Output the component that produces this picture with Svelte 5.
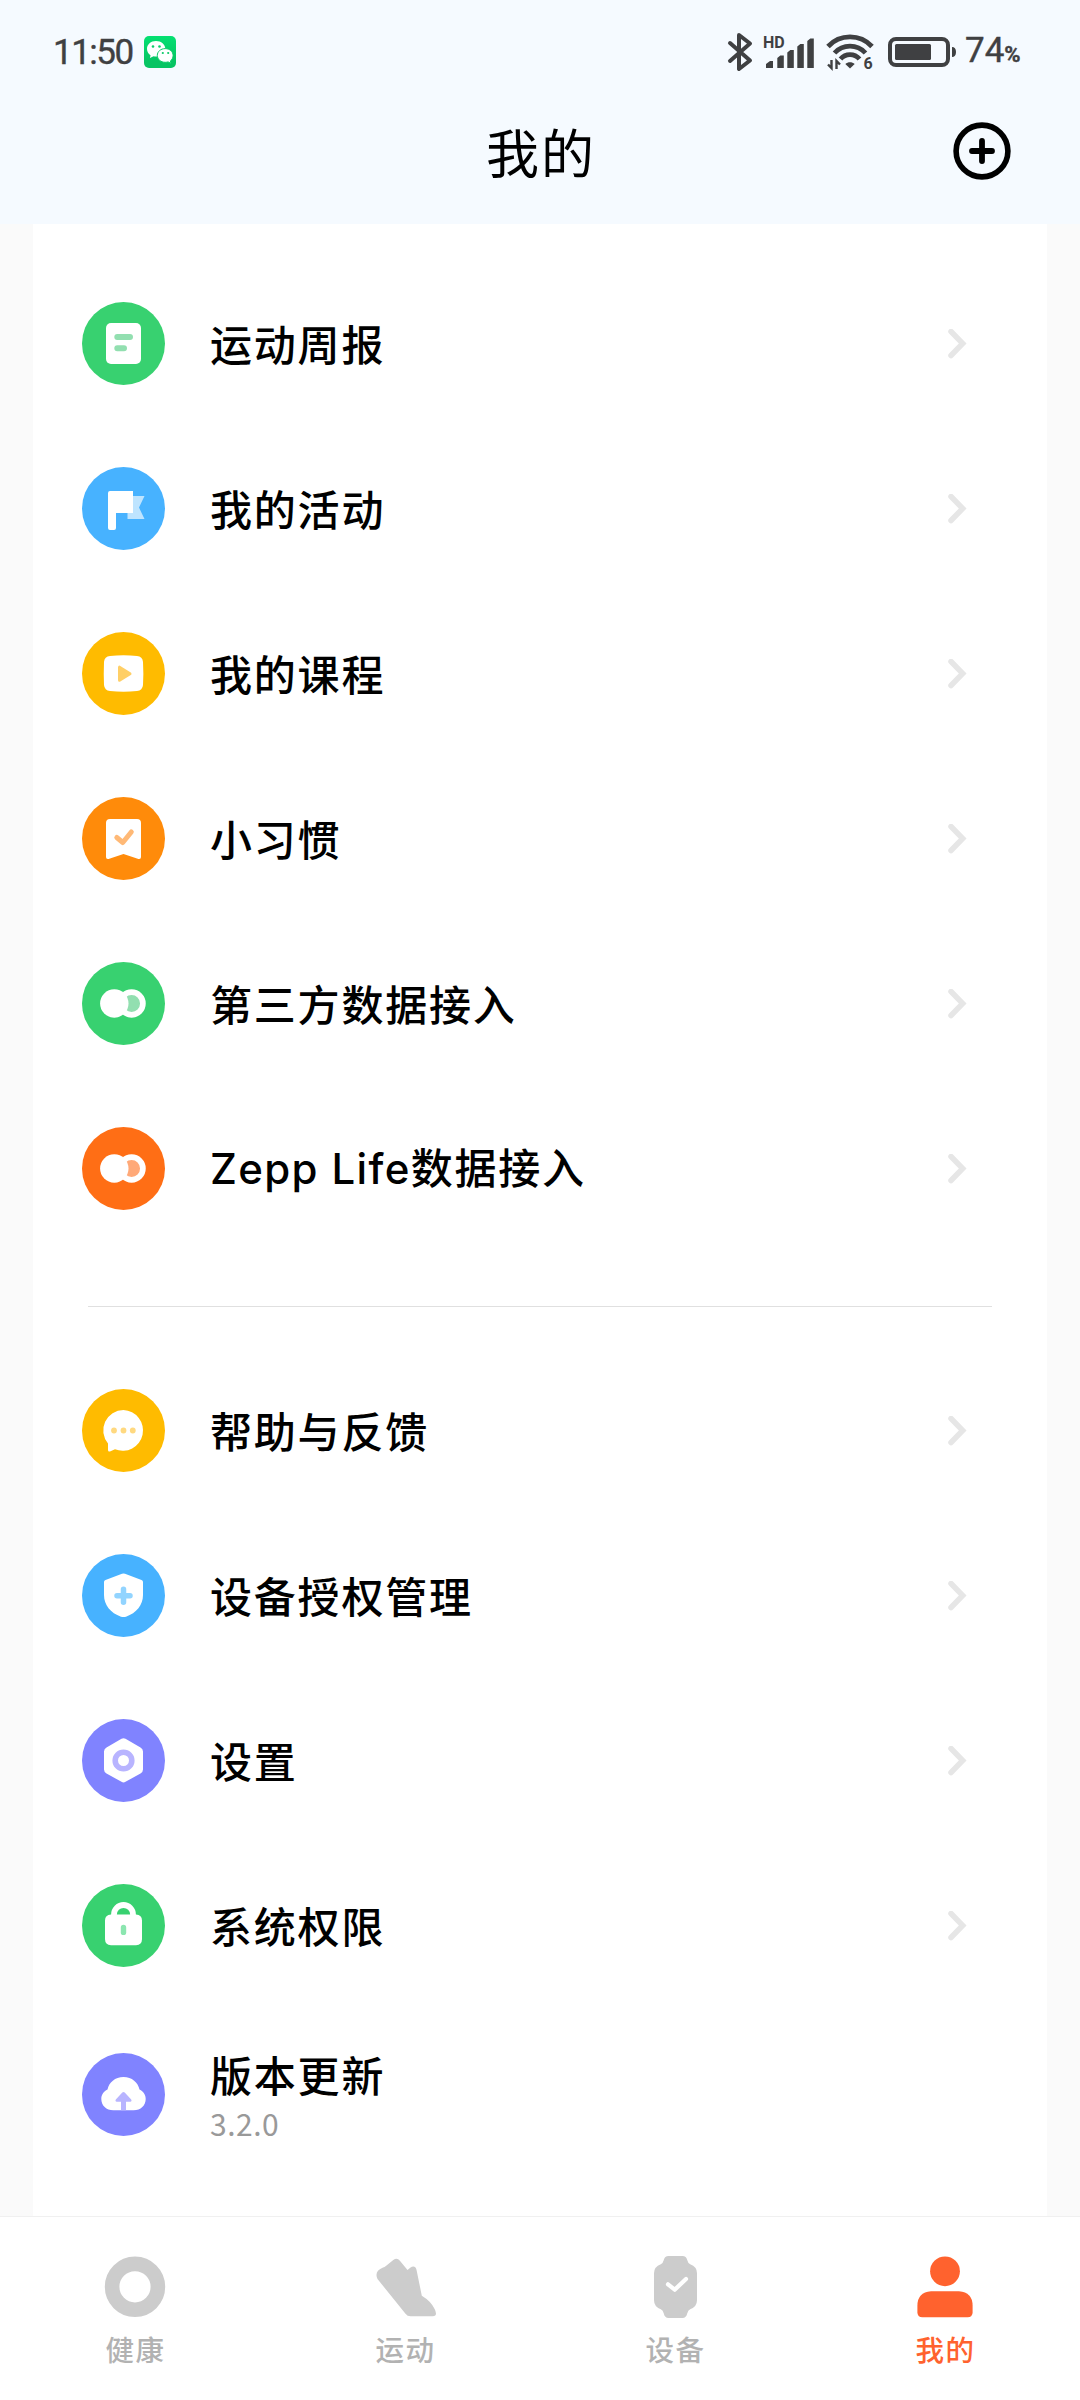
<script>
    let groups = [
        [
            { name: '运动周报', icon: 'report', color: '#38d170' },
            { name: '我的活动', icon: 'flag', color: '#47b2ff' },
            { name: '我的课程', icon: 'course', color: '#ffbb00' },
            { name: '小习惯', icon: 'habit', color: '#ff8b0a' },
            { name: '第三方数据接入', icon: 'link', color: '#38d170', soft: '#92dfb0' },
            { latin: 'Zepp Life', name: '数据接入', icon: 'link', color: '#ff6e15', soft: '#ffa978' }
        ],
        [
            { name: '帮助与反馈', icon: 'chat', color: '#ffbb00' },
            { name: '设备授权管理', icon: 'shield', color: '#47b2ff' },
            { name: '设置', icon: 'settings', color: '#8083ff' },
            { name: '系统权限', icon: 'lock', color: '#38d170' },
            { name: '版本更新', icon: 'update', color: '#8083ff', version: '3.2.0' }
        ]
    ];

    let tabs = [
        { name: '健康', icon: 'health' },
        { name: '运动', icon: 'sport' },
        { name: '设备', icon: 'device' },
        { name: '我的', icon: 'me' }
    ];

    let active = 'me';
</script>

<main class="screen">
    <header>
        <div class="status-bar">
            <span class="time">11:50</span>
            <svg class="wechat" width="32" height="32" viewBox="0 0 32 32">
                <defs>
                    <linearGradient id="wechat" x1="0" y1="0" x2="0" y2="1">
                        <stop offset="0" stop-color="#04e072" />
                        <stop offset="0.8" stop-color="#07c463" />
                    </linearGradient>
                </defs>
                <rect width="32" height="32" rx="5" fill="url(#wechat)" />
                <path d="M12 5c-5.200 0-9 3.500-9 8 0 2.600 1.300 4.700 3.500 6.200L6 22l3.500-1.700c.9.200 1.700.3 2.500.3 5.200 0 9.300-3.400 9.300-7.800S17.200 5 12 5z" fill="#fff" />
                <path d="M21.200 12.600c-4.500 0-7.900 3-7.900 6.800s3.400 6.900 7.900 6.900c1 0 2-.2 2.900-.4l2.900 1.500-.6-2.500c1.700-1.300 2.700-3.200 2.700-5.400 0-3.900-3.500-6.900-7.900-6.900z" fill="#fff" stroke="#08cc67" />
                <circle cx="9" cy="10.500" r="1.300" fill="#08d06a" />
                <circle cx="15.500" cy="10.500" r="1.300" fill="#08d06a" />
                <circle cx="18.800" cy="17" r="1.100" fill="#08c965" />
                <circle cx="24.200" cy="17" r="1.100" fill="#08c965" />
            </svg>
            <div class="indicators">
                <svg class="bluetooth" width="24" height="40" viewBox="0 0 24 40" fill="none" stroke="#3f4042" stroke-width="4" stroke-linecap="round" stroke-linejoin="round">
                    <path d="M2 11l20 17.500-11 8.500V3l11 8.500L2 29" />
                </svg>
                <svg class="signal" width="50" height="34" viewBox="0 0 50 34" fill="#3f4042">
                    <text x="-1" y="13" font-size="16" font-weight="700">HD</text>
                    <path d="M2 33v-4l4-3h3v7zM13.300 33V23l3-2.500h3.500V33zM23.300 33V17.500l3-2.500h3.500v18zM33.300 33V11.500l3-2.500h3.500v24zM43.300 33V6l3-2.500h3.500V33z" />
                </svg>
                <svg class="wifi" width="46" height="36" viewBox="0 0 46 36" fill="none" stroke="#3f4042">
                    <path d="M1 12.500a30 30 0 0 1 44 0M7.500 19a21 21 0 0 1 31 0M13.500 25a12.500 12.500 0 0 1 19 0" stroke-width="4.800" />
                    <path d="M23 34.500l-4.700-4.500c2.600-2.500 6.800-2.500 9.400 0z" fill="#3f4042" stroke="none" />
                    <path d="M4.500 26v8L1 30.500M9.500 35v-8l3.500 3.500" stroke-width="2.400" />
                    <text x="36.500" y="34.800" font-size="16" font-weight="700" fill="#3f4042" stroke="none">6</text>
                </svg>
                <svg class="battery" width="68" height="30" viewBox="0 0 68 30" fill="#3f4042">
                    <rect x="2" y="2" width="58" height="26" rx="6" fill="none" stroke="#3f4042" stroke-width="4" />
                    <rect x="7" y="7" width="36" height="16" rx="1.500" />
                    <path d="M64 10c2.500 0 4 1.500 4 5s-1.500 5-4 5z" />
                </svg>
                <span class="percent">74<small>%</small></span>
            </div>
        </div>
        <div class="title-bar">
            <h1>我的</h1>
            <svg class="add" width="60" height="60" viewBox="0 0 60 60" fill="none" stroke="#000">
                <circle cx="30" cy="30" r="25.900" stroke-width="5.600" />
                <path d="M30 20v20M20 30h20" stroke-width="5.800" stroke-linecap="round" />
            </svg>
        </div>
    </header>

    <section class="card">
        {#each groups as group}
            <ul>
                {#each group as item}
                    <li class:tall={item.version}>
                        <svg class="icon" width="83" height="83" viewBox="0 0 83 83" fill="#fff">
                            <circle cx="41.500" cy="41.500" r="41.500" fill={item.color} />
                            {#if item.icon === 'report'}
                                <rect x="24" y="21" width="35" height="41" rx="5" />
                                <path d="M35.300 35H48M35.300 46.200H42" stroke="#92dfb0" stroke-width="6" stroke-linecap="round" />
                            {:else if item.icon === 'flag'}
                                <path d="M51 29h11.500L57 40.500 62.500 52h-17v-6H51z" opacity="0.65" />
                                <path d="M28 24h23v22H34v15q0 2-2 2h-4q-2 0-2-2V26q0-2 2-2z" />
                            {:else if item.icon === 'course'}
                                <path d="M28 24q13.500-1.500 27 0 5.500.5 6 6 .7 11.500 0 23-.5 5.500-6 6-13.500 1.500-27 0-5.500-.5-6-6-.5-11.500 0-23 .5-5.500 6-6z" />
                                <path d="M37.500 35.200v13L48 41.700z" fill="#ffcf66" stroke="#ffcf66" stroke-width="3" stroke-linejoin="round" />
                            {:else if item.icon === 'habit'}
                                <path d="M28 22h27q4 0 4 4v34q0 2.500-2.500 2L41.500 57l-15 5q-2.500.5-2.500-2V26q0-4 4-4z" />
                                <path d="M34.800 40.500l6 5 8.500-10.500" fill="none" stroke="#ffb976" stroke-width="5" stroke-linecap="round" stroke-linejoin="round" />
                            {:else if item.icon === 'link'}
                                <circle cx="49.600" cy="41.500" r="11.300" fill={item.soft} stroke="#fff" stroke-width="5.700" />
                                <circle cx="32.300" cy="41.500" r="14.200" />
                            {:else if item.icon === 'chat'}
                                <path d="M41.500 21a20.400 20.400 0 1 1-8.500 39.300L28 62.500q-2 .5-2-1.500v-6.500A20.400 20.400 0 0 1 41.500 21z" />
                                <g fill="#ffd980">
                                    <circle cx="32" cy="41.500" r="2.900" />
                                    <circle cx="41.500" cy="41.500" r="2.900" />
                                    <circle cx="50.800" cy="41.500" r="2.900" />
                                </g>
                            {:else if item.icon === 'shield'}
                                <path d="M40 19.800q1.500-.7 3 0L59.500 26q1.500.7 1.500 2v13c0 10-6.500 18-17 21.700q-2.500.8-5 0C28.500 59 22 51 22 41V28q0-1.300 1.500-2z" />
                                <path d="M41.500 35.300v13M35 41.700h13" stroke="#92d4ff" stroke-width="5.500" stroke-linecap="round" />
                            {:else if item.icon === 'settings'}
                                <path d="M39.500 19.800q2-1.300 4 0l15 8.700q2.500 1.500 2.500 4v18q0 2.500-2.500 4l-15 8.300q-2 1.200-4 0l-15-8.300q-2.500-1.500-2.500-4v-18q0-2.500 2.500-4z" />
                                <circle cx="41.500" cy="41.500" r="8.300" fill="none" stroke="#b8b4ff" stroke-width="5.600" />
                            {:else if item.icon === 'lock'}
                                <path d="M32 32.500v-2a9.500 9.500 0 0 1 19 0v2" fill="none" stroke="#fff" stroke-width="5.800" />
                                <path d="M29 30.500h25q6 .5 6 6V55q0 6-6 6.300H29q-6-.3-6-6.300V36.500q0-5.500 6-6z" />
                                <rect x="38.800" y="40.700" width="5.400" height="10.400" rx="2.700" fill="#8ce6b0" />
                            {:else}
                                <path d="M41.500 24c8.500 0 14.500 5.500 16 12.500 4 2 6.200 5.500 6.200 9.500 0 6.500-5 11.300-12 11.300H31.300c-7 0-12-4.800-12-11.300 0-4 2.200-7.500 6.200-9.500C27 29.500 33 24 41.500 24z" />
                                <path d="M40.300 39.500q1.200-1 2.400 0l6.500 7q1 2-1 2.300H44v8.500h-5v-8.500h-4.200q-2-.3-1-2.300z" fill="#b8b4ff" />
                            {/if}
                        </svg>
                        <div class="text">
                            <span class="name">{#if item.latin}<span class="latin">{item.latin}</span>{/if}{item.name}</span>
                            {#if item.version}
                                <span class="version">{item.version}</span>
                            {/if}
                        </div>
                        {#if !item.version}
                            <svg class="chevron" width="20" height="30" viewBox="0 0 20 30" fill="none" stroke="#e6e6e6" stroke-width="5.500" stroke-linecap="round">
                                <path d="M4 2.500l11.700 12L4 26.500" />
                            </svg>
                        {/if}
                    </li>
                {/each}
            </ul>
        {/each}
    </section>

    <nav>
        {#each tabs as tab}
            <div class="tab" class:active={tab.icon === active}>
                <svg width="64" height="64" viewBox="0 0 64 64" fill="currentColor">
                    {#if tab.icon === 'health'}
                        <circle cx="32" cy="31.800" r="22.900" fill="none" stroke="currentColor" stroke-width="14.600" />
                    {:else if tab.icon === 'sport'}
                        <path d="M9.500 12.800q2-.5 4-2.300L20.300 5q3.700-3 6.600.7l7.600 9.300 2.700-2.300q4.800-3.200 6.300 2l5.300 26q9.200 5.500 12.800 13.300 3.500 6.800-1.800 7.200H38q-3.500.2-5.500-2.500L4.500 24q-3.500-7.500 5-11.200z" />
                    {:else if tab.icon === 'device'}
                        <path d="M25.500 1h14q3.800 0 4.700 4 .8 3.300 3 4.300 6.800 2.500 6.800 9v27q0 6.400-6.800 9-2.200 1-3 4.300-.9 4.400-4.700 4.400h-14q-3.800 0-4.700-4.400-.8-3.300-3-4.300-6.800-2.600-6.800-9v-27q0-6.500 6.800-9 2.200-1 3-4.300.9-4 4.700-4z" />
                        <path d="M25 29.300l6.700 5.400L43 24" fill="none" stroke="#fff" stroke-width="4.200" stroke-linecap="round" stroke-linejoin="round" />
                    {:else}
                        <circle cx="32" cy="16.300" r="14.900" />
                        <path d="M18 36.300h28q13.600 1 13.600 14.500v6.500q0 5-5 5H9.400q-5 0-5-5v-6.500Q4.400 37.300 18 36.300z" />
                    {/if}
                </svg>
                <span>{tab.name}</span>
            </div>
        {/each}
    </nav>
</main>

<style>
    :global(body) {
        background: #fafafa;
    }

    .screen {
        display: flex;
        flex-direction: column;
        width: 1080px;
        height: 2400px;
        overflow: hidden;
        font-family: 'Noto Sans CJK SC', sans-serif;
        background: #fafafa;
        color: #000;
    }

    header {
        height: 224px;
        background: #f5faff;
    }

    .status-bar {
        display: flex;
        align-items: center;
        height: 104px;
        padding: 0 56px 0 53px;
        font-family: Roboto, sans-serif;
        color: #3f4042;
    }

    .status-bar svg {
        flex: none;
        overflow: visible;
    }

    .time {
        width: 91px;
        padding-top: 2px;
        font-size: 35px;
        line-height: 40px;
        letter-spacing: -1.500px;
        white-space: nowrap;
        -webkit-text-stroke: 0.4px #3f4042;
    }

    .indicators {
        display: flex;
        align-items: center;
        margin-left: auto;
    }

    .signal {
        margin-left: 12px;
    }

    .wifi {
        margin-left: 13px;
    }

    .battery {
        margin: 0 9px 0 15px;
    }

    .percent {
        width: 59px;
        padding-top: 1px;
        font-size: 35px;
        line-height: 40px;
        white-space: nowrap;
        -webkit-text-stroke: 0.4px #3f4042;
    }

    .percent small {
        font-size: 22px;
        font-weight: 700;
    }

    .title-bar {
        display: grid;
        grid-template-columns: 1fr auto 1fr;
        align-items: center;
        height: 94px;
        padding: 0 68px;
    }

    h1 {
        grid-column: 2;
        margin: 0 0 1px;
        padding-left: 2px;
        font-size: 53px;
        font-weight: 400;
        line-height: 60px;
        letter-spacing: 2px;
    }

    .add {
        justify-self: end;
    }

    .card {
        flex: 1;
        margin: 0 33px;
        padding-top: 37px;
        background: #fff;
    }

    ul {
        margin: 0;
        padding: 0;
        list-style: none;
    }

    ul + ul {
        margin-top: 55px;
    }

    ul + ul::before {
        content: '';
        display: block;
        height: 1px;
        margin: 0 55px 41px;
        background: #e0e0e0;
    }

    li {
        display: flex;
        align-items: center;
        height: 165px;
        padding: 0 80px 0 49px;
    }

    li.tall {
        height: 173px;
    }

    .text {
        display: flex;
        flex: 1;
        flex-direction: column;
        margin: 0 0 2px 45px;
    }

    .tall .text {
        margin-bottom: 1px;
    }

    .name {
        font-size: 42px;
        font-weight: 500;
        line-height: 56px;
        letter-spacing: 1.800px;
        white-space: nowrap;
    }

    .latin {
        font-family: Inter, sans-serif;
        letter-spacing: 1.350px;
    }

    .version {
        margin-top: 1px;
        font-size: 30px;
        line-height: 40px;
        letter-spacing: 0.500px;
        color: #999;
    }

    nav {
        display: grid;
        grid-template-columns: repeat(4, 1fr);
        height: 183px;
        border-top: 1px solid #f0f0f0;
        background: #fff;
    }

    .tab {
        display: flex;
        flex-direction: column;
        align-items: center;
        padding-top: 38px;
        color: #ccc;
    }

    .tab span {
        margin-top: 10px;
        padding-left: 1px;
        font-size: 28.500px;
        font-weight: 500;
        line-height: 40px;
        letter-spacing: 1.500px;
        color: #b2b2b2;
    }

    .tab.active,
    .tab.active span {
        color: #ff622e;
    }
</style>
